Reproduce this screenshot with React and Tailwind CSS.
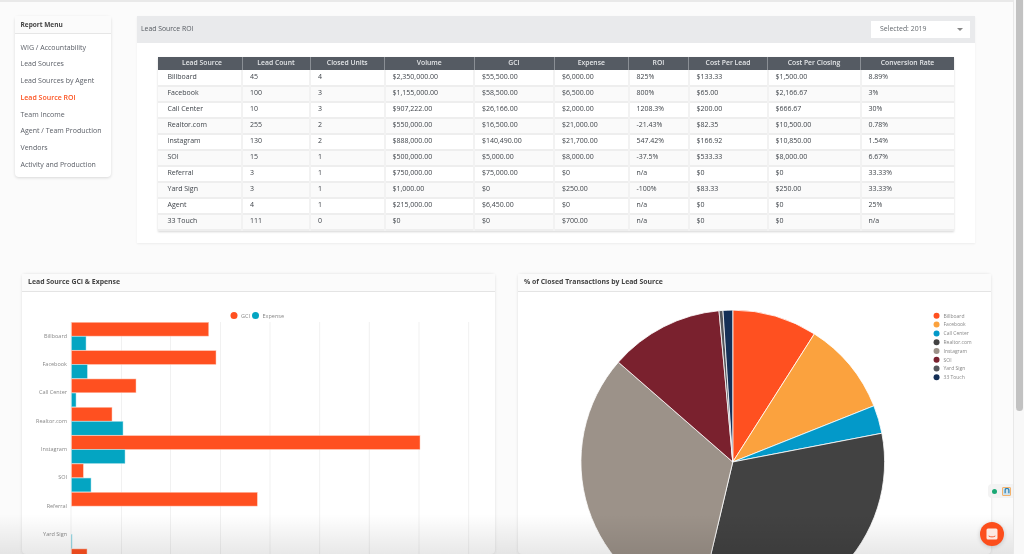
import React from 'react';

const FONT = "font-['Open_Sans','Liberation_Sans',sans-serif]";

const menuItems = [
  'WIG / Accountability',
  'Lead Sources',
  'Lead Sources by Agent',
  'Lead Source ROI',
  'Team Income',
  'Agent / Team Production',
  'Vendors',
  'Activity and Production',
];

const columns = [
  { label: 'Lead Source', width: 'w-[84.5px]' },
  { label: 'Lead Count', width: 'w-[68px]' },
  { label: 'Closed Units', width: 'w-[74.5px]' },
  { label: 'Volume', width: 'w-[89.5px]' },
  { label: 'GCI', width: 'w-[80px]' },
  { label: 'Expense', width: 'w-[74.5px]' },
  { label: 'ROI', width: 'w-[60px]' },
  { label: 'Cost Per Lead', width: 'w-[79px]' },
  { label: 'Cost Per Closing', width: 'w-[93px]' },
  { label: 'Conversion Rate', width: 'w-[93.5px]' },
];

const rows = [
  ['Billboard', '45', '4', '$2,350,000.00', '$55,500.00', '$6,000.00', '825%', '$133.33', '$1,500.00', '8.89%'],
  ['Facebook', '100', '3', '$1,155,000.00', '$58,500.00', '$6,500.00', '800%', '$65.00', '$2,166.67', '3%'],
  ['Call Center', '10', '3', '$907,222.00', '$26,166.00', '$2,000.00', '1208.3%', '$200.00', '$666.67', '30%'],
  ['Realtor.com', '255', '2', '$550,000.00', '$16,500.00', '$21,000.00', '-21.43%', '$82.35', '$10,500.00', '0.78%'],
  ['Instagram', '130', '2', '$888,000.00', '$140,490.00', '$21,700.00', '547.42%', '$166.92', '$10,850.00', '1.54%'],
  ['SOI', '15', '1', '$500,000.00', '$5,000.00', '$8,000.00', '-37.5%', '$533.33', '$8,000.00', '6.67%'],
  ['Referral', '3', '1', '$750,000.00', '$75,000.00', '$0', 'n/a', '$0', '$0', '33.33%'],
  ['Yard Sign', '3', '1', '$1,000.00', '$0', '$250.00', '-100%', '$83.33', '$250.00', '33.33%'],
  ['Agent', '4', '1', '$215,000.00', '$6,450.00', '$0', 'n/a', '$0', '$0', '25%'],
  ['33 Touch', '111', '0', '$0', '$0', '$700.00', 'n/a', '$0', '$0', 'n/a'],
];

const bars = [
  { label: 'Billboard', gci: 208.7, expense: 86 },
  { label: 'Facebook', gci: 216, expense: 87.3 },
  { label: 'Call Center', gci: 136, expense: 76 },
  { label: 'Realtor.com', gci: 112, expense: 123 },
  { label: 'Instagram', gci: 420, expense: 125 },
  { label: 'SOI', gci: 83.3, expense: 91 },
  { label: 'Referral', gci: 257.3, expense: 71 },
  { label: 'Yard Sign', gci: 71, expense: 72 },
  { gci: 87, expense: 71 },
];

const gridLines = [71, 121.5, 170.5, 220.5, 270, 319.7, 369.3, 419, 468.7];

const slices = [
  { label: 'Billboard', color: '#ff5020', end: 32.5 },
  { label: 'Facebook', color: '#fba23e', end: 68.3 },
  { label: 'Call Center', color: '#0399c9', end: 79.1 },
  { label: 'Realtor.com', color: '#424242', end: 193.3 },
  { label: 'Instagram', color: '#9c9289', end: 311.1 },
  { label: 'SOI', color: '#7a212e', end: 354.8 },
  { label: 'Yard Sign', color: '#55565b', end: 356.3 },
  { label: '33 Touch', color: '#142f56', end: 360 },
];

const polar = (deg) => {
  const rad = (deg * Math.PI) / 180;
  return [733 + 152 * Math.sin(rad), 462 - 152 * Math.cos(rad)];
};

const slicePath = (start, end) => {
  const [x1, y1] = polar(start);
  const [x2, y2] = polar(end);
  const large = end - start > 180 ? 1 : 0;
  return `M733 462L${x1} ${y1}A152 152 0 ${large} 1 ${x2} ${y2}Z`;
};

const Sidebar = () => (
  <div className="w-[96px] h-[161px] shrink-0 bg-white rounded-sm shadow-[0_1px_3px_rgba(0,0,0,0.14)]">
    <div className="h-[18px] flex items-center px-[6px] bg-[#fbfbfb] border-b border-[#e6e6e6] text-[6.5px] font-bold text-[#444]">
      Report Menu
    </div>
    <ul className="pt-[5.5px]">
      {menuItems.map((item) => (
        <li
          key={item}
          className={`h-[16.75px] flex items-center px-[6px] text-[7px] whitespace-nowrap ${
            item === 'Lead Source ROI' ? 'text-[#fc5220] font-semibold' : 'text-[#5c6068]'
          }`}
        >
          {item}
        </li>
      ))}
    </ul>
  </div>
);

const RoiTable = () => (
  <table className="table-fixed w-[796.5px] border-collapse shadow-[0_1px_2px_rgba(0,0,0,0.16)]">
    <thead>
      <tr className="h-[13px] bg-[#555b63]">
        {columns.map((col) => (
          <th
            key={col.label}
            className={`${col.width} p-0 first:pl-[5px] text-center text-[6.8px] font-semibold text-[#e4e6e8] border-r border-[#8a8f95] last:border-r-0`}
          >
            {col.label}
          </th>
        ))}
      </tr>
    </thead>
    <tbody>
      {rows.map((row, i) => (
        <tr key={row[0]} className={`h-[16px] ${i % 2 ? 'bg-[#fafafa]' : 'bg-white'} border-b-2 border-[#eeeeee]`}>
          {row.map((cell, j) => (
            <td
              key={j}
              className={`p-0 pb-[1px] text-[7px] text-[#3f444a] whitespace-nowrap border-r-2 border-[#f2f2f2] last:border-r-0 ${
                j === 0 ? 'pl-[10px]' : 'pl-[7px]'
              }`}
            >
              {cell}
            </td>
          ))}
        </tr>
      ))}
    </tbody>
  </table>
);

const RoiPanel = () => (
  <div className="w-[838px] h-[227px] bg-white shadow-[0_1px_2px_rgba(0,0,0,0.06)]">
    <div className="h-[27px] flex items-center justify-between pl-1 pr-[5px] bg-[#e9eaec]">
      <span className="text-[6.85px] text-[#555a60]">Lead Source ROI</span>
      <div className="w-[99px] h-[17px] flex items-center justify-between pl-[9px] pr-[7px] bg-white">
        <span className="text-[6.9px] text-[#666b70]">Selected: 2019</span>
        <span className="w-0 h-0 border-x-[3px] border-x-transparent border-t-[3px] border-t-[#888]" />
      </div>
    </div>
    <div className="pt-[14px] pl-[20.5px]">
      <RoiTable />
    </div>
  </div>
);

const Card = ({ title, width, children }) => (
  <div className={`${width} h-[280px] shrink-0 bg-white rounded-sm shadow-[0_0_3px_rgba(0,0,0,0.12)]`}>
    <div className="h-[18px] flex items-center px-[6px] bg-[#fbfbfb] border-b border-[#e4e4e4] text-[6.9px] font-bold text-[#444]">
      {title}
    </div>
    {children}
  </div>
);

const BarChart = () => (
  <svg viewBox="22 292 473 262" className="block w-[473px] h-[262px]">
    {gridLines.map((x) => (
      <line key={x} x1={x} x2={x} y1="322" y2="554" stroke="#f1f1f1" strokeWidth="1" />
    ))}
    <circle cx="234" cy="315.5" r="3.5" fill="#ff5020" />
    <text x="241" y="317.5" fontSize="5.5" fill="#888">GCI</text>
    <circle cx="255.5" cy="315.5" r="3.5" fill="#04a5c2" />
    <text x="262.5" y="317.5" fontSize="5.5" fill="#888">Expense</text>
    {bars.map((bar, i) => {
      const top = 322.3 + i * 28.33;
      return (
        <g key={i}>
          {bar.label && <text x="67" y={top + 15.5} fontSize="5.5" textAnchor="end" fill="#888">{bar.label}</text>}
          <rect x="71.5" y={top} width={Math.max(bar.gci - 71.5, 0)} height="13.8" fill="#ff5020" stroke="#ffc9b8" strokeWidth="0.5" />
          <rect x="71.5" y={top + 14.1} width={Math.max(bar.expense - 71.5, 0)} height="13.8" fill="#04a5c2" stroke="#a9dfe9" strokeWidth="0.5" />
        </g>
      );
    })}
  </svg>
);

const PieChart = () => (
  <svg viewBox="518 292 473 262" className="block w-[472.5px] h-[262px]">
    {slices.map((slice, i) => (
      <path
        key={slice.label}
        d={slicePath(i ? slices[i - 1].end : 0, slice.end)}
        fill={slice.color}
        stroke="#ffffff"
        strokeWidth="0.8"
      />
    ))}
    {slices.map((slice, i) => (
      <g key={slice.label}>
        <circle cx="937" cy={315.7 + i * 8.8} r="3" fill={slice.color} />
        <text x="944" y={317.5 + i * 8.8} fontSize="5" fill="#888">{slice.label}</text>
      </g>
    ))}
  </svg>
);

export default function App() {
  return (
    <div className={`relative w-[1024px] h-[554px] overflow-hidden bg-[#fbfbfb] ${FONT}`}>
      <div className="h-[2px] bg-[#e9e9e9]" />
      <div className="w-[1013px] pt-[14px] blur-[0.5px]">
        <div className="flex gap-[26.5px] pl-[14.5px]">
          <Sidebar />
          <RoiPanel />
        </div>
        <div className="flex gap-[23px] pl-[22px] pt-[31px]">
          <Card title="Lead Source GCI & Expense" width="w-[473px]">
            <BarChart />
          </Card>
          <Card title="% of Closed Transactions by Lead Source" width="w-[472.5px]">
            <PieChart />
          </Card>
        </div>
      </div>

      {/* bottom fade of the page */}
      <div className="absolute left-0 right-0 bottom-0 h-[40px] bg-gradient-to-b from-transparent to-[rgba(0,0,0,0.09)] pointer-events-none" />

      {/* scrollbar */}
      <div className="absolute top-0 right-0 bottom-0 w-[11px] bg-[#f8f8f8] border-l border-[#e8e8e8]">
        <div className="ml-[2px] w-[6.5px] h-[411px] rounded-b bg-[#c2c2c2]" />
      </div>

      {/* status widget */}
      <div className="absolute left-[988px] top-[484px] w-[25px] h-[14px] flex items-center gap-[5px] pl-[4px] bg-[#f3f3f3] rounded-l-sm">
        <span className="w-[5px] h-[5px] rounded-full bg-[#1aa874]" />
        <span className="w-[9px] h-[9px] flex items-center justify-center rounded-[1px] border border-[#f4b26c] bg-[#cfe3ee]">
          <svg viewBox="0 0 8 8" className="w-[6px] h-[6px]">
            <path d="M1.5 7V3a2.5 2.5 0 0 1 5 0v4" fill="none" stroke="#2a7fb0" strokeWidth="1.6" />
          </svg>
        </span>
      </div>

      {/* chat button */}
      <div className="absolute left-[980px] top-[522px] w-[24px] h-[24px] flex items-center justify-center rounded-full bg-[#fc4e1c] shadow-[0_1px_4px_rgba(0,0,0,0.18)]">
        <svg viewBox="0 0 12 12" className="w-[12px] h-[12px]">
          <rect x="0.5" y="0.5" width="11" height="11" rx="1.5" fill="#fde9e2" />
          <path d="M3 8.2c1.8 1 4.2 1 6 0" fill="none" stroke="#fc4e1c" strokeWidth="0.9" strokeLinecap="round" />
        </svg>
      </div>
    </div>
  );
}
